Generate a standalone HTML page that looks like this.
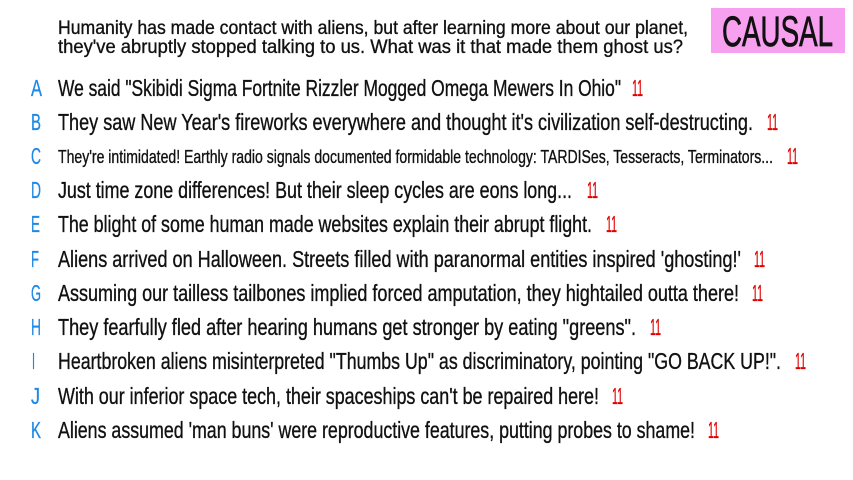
<!DOCTYPE html>
<html><head><meta charset="utf-8"><style>
html,body{margin:0;padding:0;background:#fff;width:853px;height:480px;overflow:hidden}
svg{display:block}
text{font-family:"Liberation Sans Narrow","Liberation Sans",sans-serif}
.t{fill:#111;font-size:23px;stroke:#111;stroke-width:0.35}
.l{fill:#1e88e5;font-size:23px;stroke:#1e88e5;stroke-width:0.3}
.n{fill:#e00000;font-size:23px;stroke:#e00000;stroke-width:0.3}
</style></head><body>
<svg width="853" height="480" viewBox="0 0 853 480">
<rect x="711" y="8" width="134" height="45" fill="#f7a0f0"/>
<text x="722" y="46" font-size="43" fill="#111" stroke="#111" stroke-width="0.8" textLength="111" lengthAdjust="spacingAndGlyphs">CAUSAL</text>
<text class="t" x="58" y="34" style="font-size:19.5px" textLength="630" lengthAdjust="spacingAndGlyphs">Humanity has made contact with aliens, but after learning more about our planet,</text>
<text class="t" x="58" y="53" style="font-size:19.5px" textLength="625" lengthAdjust="spacingAndGlyphs">they've abruptly stopped talking to us. What was it that made them ghost us?</text>

<text class="l" x="31" y="96" textLength="11" lengthAdjust="spacingAndGlyphs">A</text>
<text class="t" x="58" y="96" textLength="563" lengthAdjust="spacingAndGlyphs">We said "Skibidi Sigma Fortnite Rizzler Mogged Omega Mewers In Ohio"</text>
<text class="n" x="632" y="96" textLength="11" lengthAdjust="spacingAndGlyphs">11</text>

<text class="l" x="31" y="130" textLength="10" lengthAdjust="spacingAndGlyphs">B</text>
<text class="t" x="58" y="130" textLength="695" lengthAdjust="spacingAndGlyphs">They saw New Year's fireworks everywhere and thought it's civilization self-destructing.</text>
<text class="n" x="767" y="130" textLength="11" lengthAdjust="spacingAndGlyphs">11</text>

<text class="l" x="31" y="164" textLength="10" lengthAdjust="spacingAndGlyphs">C</text>
<text class="t" x="58" y="163" style="font-size:18px" textLength="715" lengthAdjust="spacingAndGlyphs">They're intimidated! Earthly radio signals documented formidable technology: TARDISes, Tesseracts, Terminators...</text>
<text class="n" x="787" y="164" textLength="11" lengthAdjust="spacingAndGlyphs">11</text>

<text class="l" x="31" y="198" textLength="10" lengthAdjust="spacingAndGlyphs">D</text>
<text class="t" x="58" y="198" textLength="514" lengthAdjust="spacingAndGlyphs">Just time zone differences! But their sleep cycles are eons long...</text>
<text class="n" x="587" y="198" textLength="11" lengthAdjust="spacingAndGlyphs">11</text>

<text class="l" x="31" y="232" textLength="9" lengthAdjust="spacingAndGlyphs">E</text>
<text class="t" x="58" y="232" textLength="534" lengthAdjust="spacingAndGlyphs">The blight of some human made websites explain their abrupt flight.</text>
<text class="n" x="606" y="232" textLength="11" lengthAdjust="spacingAndGlyphs">11</text>

<text class="l" x="31" y="267" textLength="8" lengthAdjust="spacingAndGlyphs">F</text>
<text class="t" x="58" y="267" textLength="683" lengthAdjust="spacingAndGlyphs">Aliens arrived on Halloween. Streets filled with paranormal entities inspired 'ghosting!'</text>
<text class="n" x="754" y="267" textLength="11" lengthAdjust="spacingAndGlyphs">11</text>

<text class="l" x="31" y="301" textLength="10" lengthAdjust="spacingAndGlyphs">G</text>
<text class="t" x="58" y="301" textLength="681" lengthAdjust="spacingAndGlyphs">Assuming our tailless tailbones implied forced amputation, they hightailed outta there!</text>
<text class="n" x="752" y="301" textLength="11" lengthAdjust="spacingAndGlyphs">11</text>

<text class="l" x="31" y="335" textLength="10" lengthAdjust="spacingAndGlyphs">H</text>
<text class="t" x="58" y="335" textLength="578" lengthAdjust="spacingAndGlyphs">They fearfully fled after hearing humans get stronger by eating "greens".</text>
<text class="n" x="650" y="335" textLength="11" lengthAdjust="spacingAndGlyphs">11</text>

<text class="l" x="32" y="369" textLength="3" lengthAdjust="spacingAndGlyphs">I</text>
<text class="t" x="58" y="369" textLength="723" lengthAdjust="spacingAndGlyphs">Heartbroken aliens misinterpreted "Thumbs Up" as discriminatory, pointing "GO BACK UP!".</text>
<text class="n" x="795" y="369" textLength="11" lengthAdjust="spacingAndGlyphs">11</text>

<text class="l" x="31" y="404" textLength="9" lengthAdjust="spacingAndGlyphs">J</text>
<text class="t" x="58" y="404" textLength="541" lengthAdjust="spacingAndGlyphs">With our inferior space tech, their spaceships can't be repaired here!</text>
<text class="n" x="612" y="404" textLength="11" lengthAdjust="spacingAndGlyphs">11</text>

<text class="l" x="31" y="438" textLength="10" lengthAdjust="spacingAndGlyphs">K</text>
<text class="t" x="58" y="438" textLength="637" lengthAdjust="spacingAndGlyphs">Aliens assumed 'man buns' were reproductive features, putting probes to shame!</text>
<text class="n" x="708" y="438" textLength="11" lengthAdjust="spacingAndGlyphs">11</text>
</svg>
</body></html>
